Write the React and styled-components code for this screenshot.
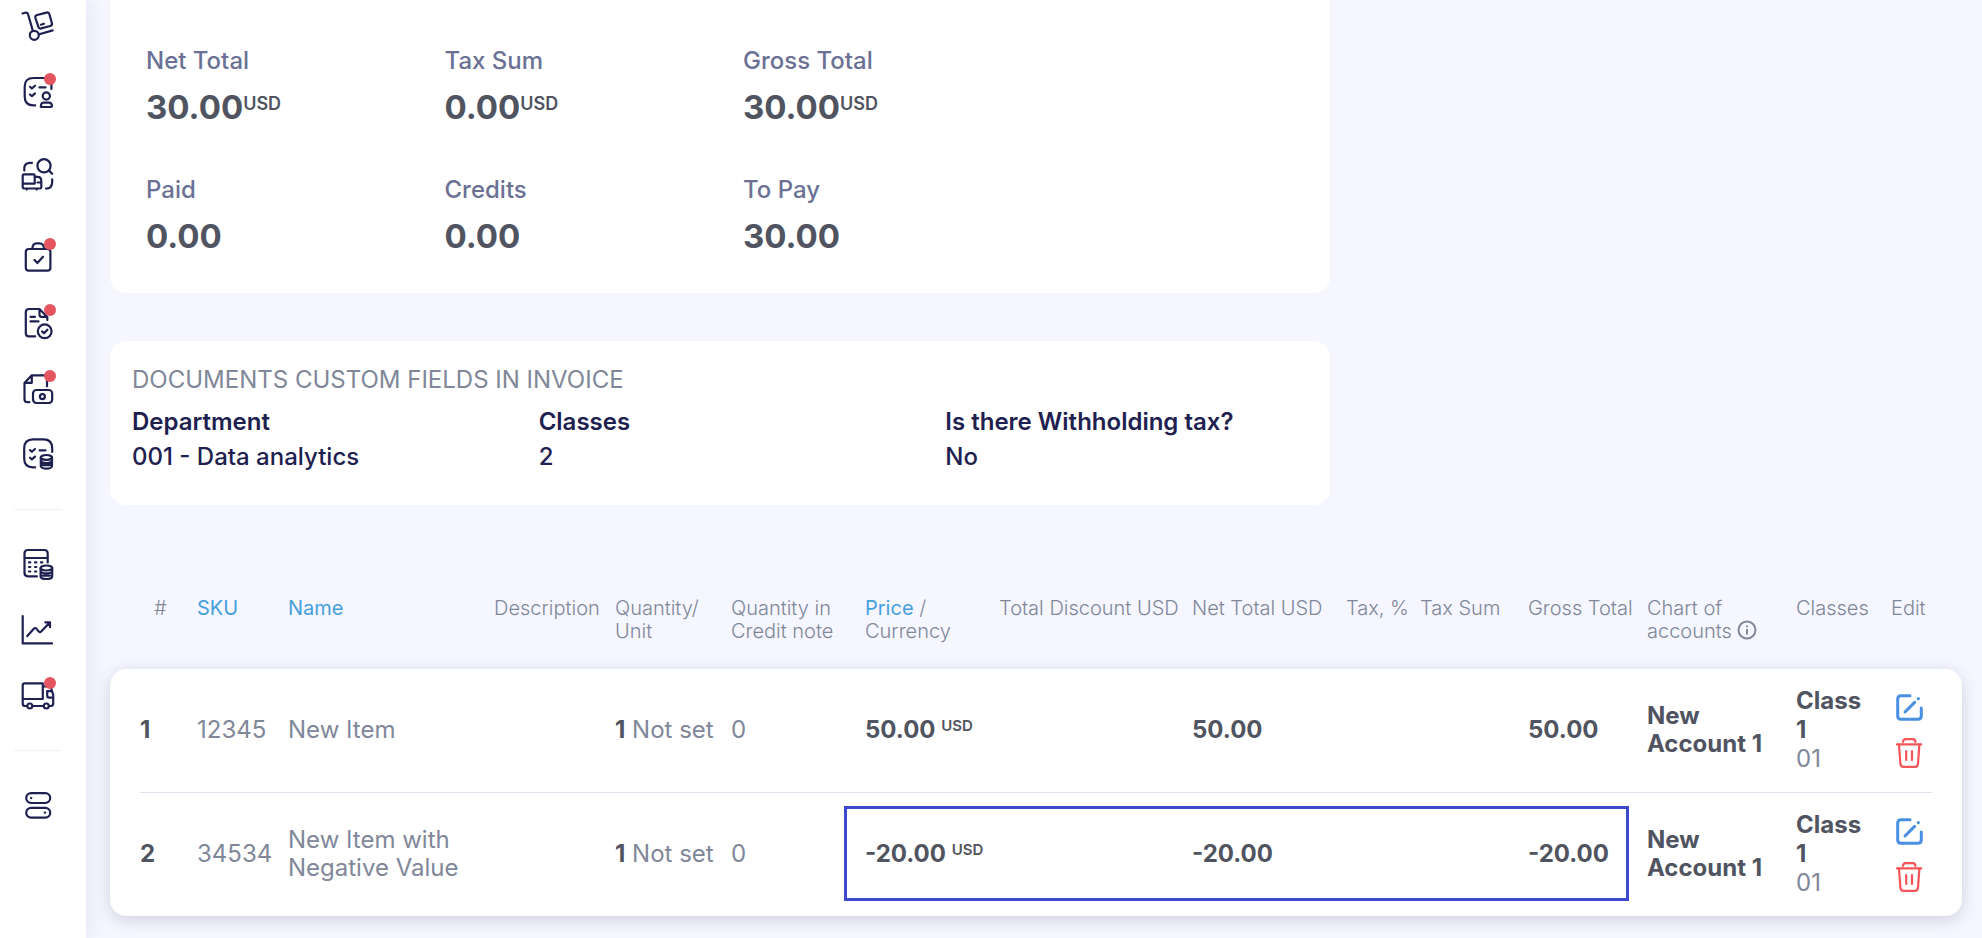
import React from "react";
import styled, { createGlobalStyle } from "styled-components";

const GlobalStyle = createGlobalStyle`
  * {
    box-sizing: border-box;
  }

  body {
    margin: 0;
    background-color: #f5f6ff;
    font-family: Inter, "Liberation Sans", sans-serif;
    color: #505461;
  }
`;

const Page = styled.div`
  display: flex;
  min-height: 100vh;
  overflow: hidden;
`;

/* Sidebar */
const Sidebar = styled.nav`
  flex: 0 0 86px;
  padding-right: 10px;
  background-color: #ffffff;
  box-shadow: 0 0 20px rgba(30, 33, 80, 0.1);
`;

const NavList = styled.ul`
  list-style: none;
  margin: -6px 0 0;
  padding: 0;
`;

const NavItem = styled.li`
  display: flex;
  justify-content: center;
  align-items: center;
  height: 66px;
  margin: ${({ $spaced }) => ($spaced ? "16px 0 17px" : "0")};
`;

const NavDivider = styled.li`
  height: 1px;
  margin: 20px 14px 22px;
  background-color: #f1f1f4;
`;

const NavLink = styled.a`
  position: relative;
  width: 36px;
  height: 36px;
  color: #1e2150;
`;

const NavSvg = styled.svg`
  display: block;
  width: 36px;
  height: 36px;
  fill: none;
  stroke: currentColor;
  stroke-width: 2.2;
  stroke-linecap: round;
  stroke-linejoin: round;
`;

const Badge = styled.span`
  position: absolute;
  top: -2px;
  left: 24px;
  width: 12px;
  height: 12px;
  border-radius: 50%;
  background-color: #e4555f;
`;

/* Content */
const Content = styled.main`
  flex: 1;
  min-width: 0;
  padding: 0 20px 22px 24px;
`;

const Overview = styled.div`
  display: grid;
  grid-template-columns: 2fr 1fr;
  column-gap: 22px;
`;

const Cards = styled.div`
  display: flex;
  flex-direction: column;
  gap: 48px;
`;

const Totals = styled.dl`
  display: grid;
  grid-template-columns: repeat(3, 26%);
  row-gap: 47px;
  margin: 0;
  padding: 46px 36px 36px;
  border-radius: 0 0 16px 16px;
  background-color: #ffffff;
`;

const TotalLabel = styled.dt`
  font-size: 24px;
  line-height: 29px;
  font-weight: 500;
  color: #6b7194;
`;

const TotalValue = styled.dd`
  margin: 12px 0 0;
  font-size: 33px;
  line-height: 41px;
  font-weight: 700;
`;

const Currency = styled.sup`
  font-size: ${({ $small }) => ($small ? "15px" : "18px")};
  line-height: 0;
  font-weight: 600;
  vertical-align: ${({ $small }) => ($small ? "7px" : "9px")};
`;

const FieldsCard = styled.section`
  padding: 24px 0 34px;
  border-radius: 16px;
  background-color: #ffffff;
`;

const FieldsTitle = styled.h2`
  margin: 0 0 13px;
  padding-left: 22px;
  font-size: 24px;
  line-height: 29px;
  font-weight: 400;
  text-transform: uppercase;
  color: #808799;
`;

const Fields = styled.dl`
  display: grid;
  grid-template-columns: repeat(3, 1fr);
  margin: 0;
  font-size: 24px;
  line-height: 29px;
  font-weight: 500;
  color: #1e2150;
`;

const Field = styled.div`
  padding-left: 22px;
`;

const FieldName = styled.dt`
  font-weight: 600;
`;

const FieldValue = styled.dd`
  margin: 6px 0 0;
`;

/* Items table */
const Table = styled.table`
  display: block;
  margin-top: 92px;
  color: #808799;
`;

const Head = styled.thead`
  display: block;
  padding: 0 30px 26px;
`;

const Body = styled.tbody`
  display: block;
  padding: 0 30px;
  border-radius: 16px;
  background-color: #ffffff;
  box-shadow: 0 4px 16px rgba(40, 42, 70, 0.18);
`;

const Row = styled.tr`
  display: grid;
  grid-template-columns:
    57px 91px minmax(0, 1fr) 121px 116px 134px 134px 193px
    154px 74px 108px 119px 149px 95px 41px;
`;

const ItemRow = styled(Row)`
  position: relative;
  align-items: center;
  min-height: 123px;

  & + & {
    min-height: 124px;
    border-top: 1px solid #dfe2ec;
  }

  /* frame round the amounts, from the price to the gross total */
  ${({ $marked }) =>
    $marked &&
    `
    &::after {
      content: "";
      position: absolute;
      grid-column: 7 / 13;
      inset: 13px 18px 15px -21px;
      border: 3px solid #3d48cc;
      pointer-events: none;
    }
  `}
`;

const HeadCell = styled.th`
  padding: 0;
  padding-left: ${({ $indent }) => ($indent ? "14px" : "0")};
  font-size: 20px;
  line-height: 23px;
  font-weight: 300;
  text-align: left;
  white-space: nowrap;
`;

const SortLink = styled.a`
  color: #45a0dc;
  font-weight: 400;
  text-decoration: none;
`;

const InfoIcon = styled.svg`
  width: 20px;
  height: 20px;
  vertical-align: -2px;
  fill: none;
  stroke: currentColor;
  stroke-width: 2;
`;

const Cell = styled.td`
  padding: 0 0 2px;
  font-size: 24px;
  line-height: ${({ $tall }) => ($tall ? "29px" : "28px")};
  white-space: ${({ $wrap }) => ($wrap ? "normal" : "nowrap")};
`;

const ActionsCell = styled.td`
  padding: 0 0 0 5px;
`;

const Strong = styled.b`
  font-weight: 700;
  color: #505461;
`;

const Actions = styled.div`
  display: flex;
  flex-direction: column;
  gap: 17px;
`;

const ActionButton = styled.button`
  display: block;
  width: 27px;
  height: ${({ $danger }) => ($danger ? "30px" : "27px")};
  padding: 0;
  border: none;
  background: none;
  color: ${({ $danger }) => ($danger ? "#f65458" : "#4a90e2")};
  cursor: pointer;

  svg {
    display: block;
    width: 100%;
    height: 100%;
    fill: none;
    stroke: currentColor;
    stroke-linecap: round;
    stroke-linejoin: round;
  }
`;

const icons = {
  trolley: (
    <>
      <path d="M2.5 4.5 5 3.8Q7.6 3.2 8.3 6L12.8 21.8" />
      <circle cx="14.3" cy="26.3" r="4.5" />
      <path d="M19.3 25.3 32.7 21.4" />
      <path d="M17.2 6 26.5 3.6Q28.8 3 29.4 5.2L31.9 14.2Q32.4 16.4 30.2 17L21.2 19.4Q19 20 18.4 17.8L15.4 9Q14.8 6.6 17.2 6Z" />
      <path d="M20.9 15.7 24 14.8" />
    </>
  ),
  assignments: (
    <>
      <path d="M25 3H13.5Q4.7 3 4.7 11.5V21.5Q4.7 30.4 13.5 30.4H15.2M31.4 9.5V14" />
      <path d="M10 11.8 11.9 13.5 15 10.7M10 19.5 11.9 21.2 15 18.4M19.5 12.4H25.5" />
      <circle cx="26.3" cy="21" r="3.6" />
      <path d="M23.5 27.7H29Q31.6 27.7 32 31 32 32 31 32H21.6Q20.6 32 20.8 31 21.2 27.7 23.5 27.7Z" />
    </>
  ),
  tracking: (
    <>
      <path d="M4.3 13.6V11.5Q4.3 5.8 10 5.8H12M32.2 22.3V25Q32.2 31.6 26 31.6" />
      <circle cx="24" cy="8.8" r="6.6" />
      <path d="M28.8 13.4 32.2 16.8" />
      <path d="M14.7 26.7H2.7M14.7 26.7V18.5Q14.7 17.4 13.6 17.4H4Q2.7 17.4 2.7 18.7V30.2Q2.7 31.5 4 31.5H20Q21.3 31.5 21.3 30.2V24Q21.3 19.8 17.5 19.8H14.7M17.5 25.5H21.3M6.7 32.6V32.4M16.7 32.6V32.4" />
    </>
  ),
  orders: (
    <>
      <rect x="5.8" y="9" width="24.6" height="21.7" rx="3" />
      <path d="M12.3 8.5Q12.8 3.4 16.5 3.4H19.8Q23.5 3.4 24 8.5M14.5 20 17.4 23.1 23 16.8" />
    </>
  ),
  invoices: (
    <>
      <path d="M15.2 30.3H9Q5.8 30.3 5.8 27.2V6.2Q5.8 3 9 3H19.5L27.3 11V14M19.5 3V8.8Q19.5 10.8 21.5 10.8H27.3M10.5 10.8H15M10.5 15.4H18.5" />
      <circle cx="24.7" cy="25.3" r="6.9" />
      <path d="M22 25.4 24 27.3 27.4 23.7" />
    </>
  ),
  payments: (
    <>
      <path d="M9.3 30.2H7.5Q4.5 30.2 4.5 27.2V11L11.8 3.3H27V14.2M11.8 3.3V10.8H4.7" />
      <rect x="13" y="18" width="19.2" height="13" rx="3.5" />
      <circle cx="22.4" cy="24.6" r="2.5" />
    </>
  ),
  budgets: (
    <>
      <path d="M15.2 29.3H13Q4.2 29.3 4.2 20.5V10.2Q4.2 1.4 13 1.4H23.4Q32.2 1.4 32.2 10.2V14" />
      <path d="M10 12.1 11.9 13.8 15 11M10 19.7 11.9 21.4 15 18.6M19.5 12.3H25.5" />
      <ellipse cx="26.4" cy="19.4" rx="5.6" ry="2.4" />
      <path d="M20.8 19.4V28.3Q21.5 30.6 26.4 30.6T32 28.3V19.4M20.8 22.6Q21.5 25 26.4 25T32 22.6M22.5 27.2H30" />
    </>
  ),
  accounting: (
    <>
      <path d="M17 29.3H8Q4.5 29.3 4.5 25.8V6.5Q4.5 3 8 3H24.2Q27.7 3 27.7 6.5V15.5M4.5 11H27.7" />
      <path d="M9 15.4H10.3M15 15.4H16.3M21 15.4H22.3M9 20H10.3M15 20H16.3M9 24.5H10.3M15 24.5H16.3" />
      <ellipse cx="26.4" cy="21" rx="5.8" ry="2.5" />
      <path d="M20.6 21V29.6Q21.3 32 26.4 32T32.2 29.6V21M20.6 24Q21.3 26.4 26.4 26.4T32.2 24M22.5 28.6H30" />
    </>
  ),
  reports: (
    <>
      <path d="M2.7 3V30.4H32M7.3 23.1 14 15.6Q15.2 14.4 16.3 15.6L18.8 18.5Q20 19.6 21.2 18.5L29.8 9.6M25.3 9.3H30V14.2" />
    </>
  ),
  deliveries: (
    <>
      <path d="M7 27H5Q2.7 27 2.7 24.6V6.3Q2.7 4.4 4.6 4.4H22.8V20H2.7M22.8 7.4H28Q30.6 7.4 31.4 10L33.2 16V24.6Q33.2 27 31 27H29M12.5 27H23.6" />
      <path d="M31.5 12.2H27.2V16.5Q27.2 18.6 29.2 18.6H33" />
      <circle cx="9.8" cy="27" r="2.5" />
      <circle cx="26.3" cy="27" r="2.5" />
    </>
  ),
  integrations: (
    <>
      <rect x="6.2" y="5.2" width="24" height="9.8" rx="4.9" />
      <rect x="6.2" y="19.8" width="24" height="9.8" rx="4.9" />
      <path d="M11 10.1H11.3M24.8 24.7H25.1" />
    </>
  ),
};

const navigation = [
  { icon: "trolley", label: "Purchases" },
  { icon: "assignments", label: "Assignments", badge: true },
  { icon: "tracking", label: "Tracking", spaced: true },
  { icon: "orders", label: "Orders", badge: true },
  { icon: "invoices", label: "Invoices", badge: true },
  { icon: "payments", label: "Payments", badge: true },
  { icon: "budgets", label: "Budgets" },
  { divider: true },
  { icon: "accounting", label: "Accounting" },
  { icon: "reports", label: "Reports" },
  { icon: "deliveries", label: "Deliveries", badge: true },
  { divider: true },
  { icon: "integrations", label: "Integrations" },
];

const totals = [
  { label: "Net Total", value: "30.00", currency: "USD" },
  { label: "Tax Sum", value: "0.00", currency: "USD" },
  { label: "Gross Total", value: "30.00", currency: "USD" },
  { label: "Paid", value: "0.00" },
  { label: "Credits", value: "0.00" },
  { label: "To Pay", value: "30.00" },
];

const customFields = [
  { name: "Department", value: "001 - Data analytics" },
  { name: "Classes", value: "2" },
  { name: "Is there Withholding tax?", value: "No" },
];

const items = [
  { id: 1, sku: "12345", name: "New Item", amount: "50.00" },
  {
    id: 2,
    sku: "34534",
    name: "New Item with Negative Value",
    amount: "-20.00",
    marked: true,
  },
];

function Navigation() {
  return (
    <Sidebar>
      <NavList>
        {navigation.map((item, index) =>
          item.divider ? (
            <NavDivider key={index} />
          ) : (
            <NavItem key={index} $spaced={item.spaced}>
              <NavLink href="#" aria-label={item.label}>
                <NavSvg viewBox="0 0 36 36">{icons[item.icon]}</NavSvg>
                {item.badge && <Badge />}
              </NavLink>
            </NavItem>
          )
        )}
      </NavList>
    </Sidebar>
  );
}

function ItemsTable() {
  return (
    <Table>
      <Head>
        <Row>
          <HeadCell $indent>#</HeadCell>
          <HeadCell>
            <SortLink href="#">SKU</SortLink>
          </HeadCell>
          <HeadCell>
            <SortLink href="#">Name</SortLink>
          </HeadCell>
          <HeadCell>Description</HeadCell>
          <HeadCell>
            Quantity/
            <br />
            Unit
          </HeadCell>
          <HeadCell>
            Quantity in
            <br />
            Credit note
          </HeadCell>
          <HeadCell>
            <SortLink href="#">Price</SortLink> /
            <br />
            Currency
          </HeadCell>
          <HeadCell>Total Discount USD</HeadCell>
          <HeadCell>Net Total USD</HeadCell>
          <HeadCell>Tax, %</HeadCell>
          <HeadCell>Tax Sum</HeadCell>
          <HeadCell>Gross Total</HeadCell>
          <HeadCell>
            Chart of
            <br />
            accounts{" "}
            <InfoIcon viewBox="0 0 20 20">
              <circle cx="10" cy="10" r="8.5" />
              <path d="M10 9V14.5M10 5.5V7.3" />
            </InfoIcon>
          </HeadCell>
          <HeadCell>Classes</HeadCell>
          <HeadCell>Edit</HeadCell>
        </Row>
      </Head>
      <Body>
        {items.map(({ id, sku, name, amount, marked }) => (
          <ItemRow key={id} $marked={marked}>
            <Cell>
              <Strong>{id}</Strong>
            </Cell>
            <Cell>{sku}</Cell>
            <Cell $wrap>{name}</Cell>
            <Cell />
            <Cell>
              <Strong>1</Strong> Not set
            </Cell>
            <Cell>0</Cell>
            <Cell>
              <Strong>
                {amount} <Currency $small>USD</Currency>
              </Strong>
            </Cell>
            <Cell />
            <Cell>
              <Strong>{amount}</Strong>
            </Cell>
            <Cell />
            <Cell />
            <Cell>
              <Strong>{amount}</Strong>
            </Cell>
            <Cell $wrap>
              <Strong>
                New
                <br />
                Account 1
              </Strong>
            </Cell>
            <Cell $tall>
              <Strong>
                Class
                <br />1
              </Strong>
              <br />
              01
            </Cell>
            <ActionsCell>
              <Actions>
                <ActionButton type="button" aria-label="Edit item">
                  <svg viewBox="0 0 27 27" strokeWidth="3">
                    <path d="M14 1.7H5Q1.7 1.7 1.7 5V22Q1.7 25.3 5 25.3H22Q25.3 25.3 25.3 22V14" />
                    <path d="M9 18 18.6 8.4M22.2 4.8 22.4 4.6" />
                  </svg>
                </ActionButton>
                <ActionButton type="button" $danger aria-label="Delete item">
                  <svg viewBox="0 0 27 30" strokeWidth="2.2">
                    <path d="M1 6.4H25.2M7 4Q7 1.2 9.6 1.2H16.8Q19.4 1.2 19.4 4" />
                    <path d="M3 6.6 4.4 25.6Q4.6 28.8 7.6 28.8H18.8Q21.8 28.8 22 25.6L23.4 6.6M10.2 13V22M16 13V22" />
                  </svg>
                </ActionButton>
              </Actions>
            </ActionsCell>
          </ItemRow>
        ))}
      </Body>
    </Table>
  );
}

function App() {
  return (
    <Page>
      <GlobalStyle />
      <Navigation />
      <Content>
        <Overview>
          <Cards>
            <Totals>
              {totals.map(({ label, value, currency }) => (
                <div key={label}>
                  <TotalLabel>{label}</TotalLabel>
                  <TotalValue>
                    {value}
                    {currency && <Currency>{currency}</Currency>}
                  </TotalValue>
                </div>
              ))}
            </Totals>
            <FieldsCard>
              <FieldsTitle>Documents custom fields in invoice</FieldsTitle>
              <Fields>
                {customFields.map(({ name, value }) => (
                  <Field key={name}>
                    <FieldName>{name}</FieldName>
                    <FieldValue>{value}</FieldValue>
                  </Field>
                ))}
              </Fields>
            </FieldsCard>
          </Cards>
        </Overview>
        <ItemsTable />
      </Content>
    </Page>
  );
}

export default App;
